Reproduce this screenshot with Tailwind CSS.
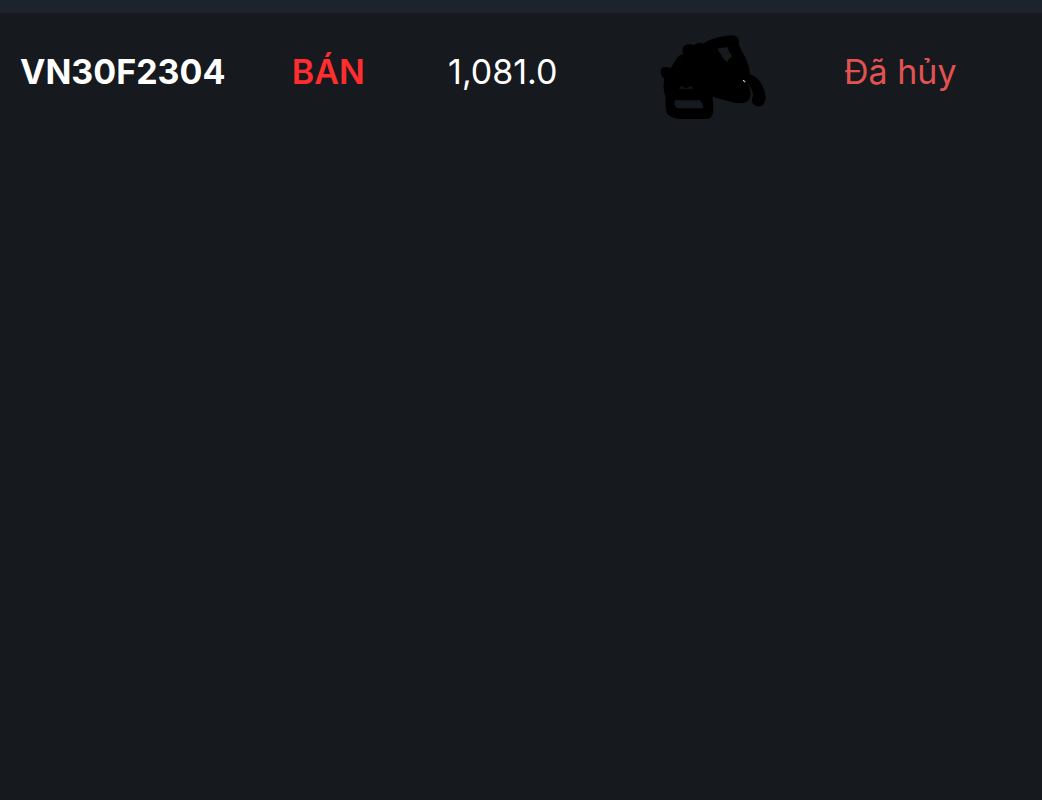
<!DOCTYPE html>
<html lang="vi">
<head>
    <meta charset="UTF-8">
    <meta name="viewport" content="width=device-width, initial-scale=1.0">
    <title>Sổ lệnh</title>
    <script src="https://cdn.jsdelivr.net/npm/@tailwindcss/browser@4"></script>
</head>
<body class="min-h-screen bg-[#16191d] text-white font-['Inter',sans-serif]">
    <div class="h-[13px] bg-[#1c232c]"></div>

    <!-- Danh sách lệnh -->
    <table class="w-full table-fixed text-left text-[34px] leading-10">
        <tbody>
            <tr class="h-[118px]">
                <td class="w-[28%] pl-5 font-bold">VN30F2304</td>
                <td class="w-[15%] font-semibold text-[#ff2d30]">BÁN</td>
                <td class="w-[20%]">1,081.0</td>
                <td class="w-[18%] pt-2.5 pl-[3px]">
                    <!-- Khối lượng đã che -->
                    <svg class="h-[86px] w-[108px]" viewBox="57 27 324 258" role="img" aria-label="Đã che">
                        <path fill="#000" fill-rule="evenodd" d="M62 142C60 131 68 124 77 126Q86 126 92 130Q99 116 108 104Q114 90 130 87C121 67 136 55 149 58Q156 58 161 61Q174 49 188 56Q222 37 252 34Q276 28 289 34Q300 41 296 58Q303 76 317 98Q327 120 331 149Q350 152 363 175Q376 197 377 216Q376 244 354 244C337 243 332 227 338 216Q341 210 337 200Q331 181 316 168Q331 183 332 208Q330 232 307 235Q281 235 254 226L217 215Q222 240 219 263Q216 281 201 282L121 282Q94 279 81 266Q74 246 77 215Q67 197 73 161Q62 153 62 142ZM232 71L262 66L268 82Q276 87 275 98Q265 98 263 111Q253 108 247 96ZM105 226L181 226Q188 236 190 250L115 250Q98 244 105 226ZM117 191L124 183Q138 195 153 183L159 191Z"/>
                        <path fill="#0c0e11" d="M220 181L242 187L228 184Z"/>
                        <path fill="#ddd" d="M309 165h4v3h3v4h-3v-3h-4z"/>
                    </svg>
                </td>
                <td class="text-[#e15353]">Đã hủy</td>
            </tr>
        </tbody>
    </table>
</body>
</html>
